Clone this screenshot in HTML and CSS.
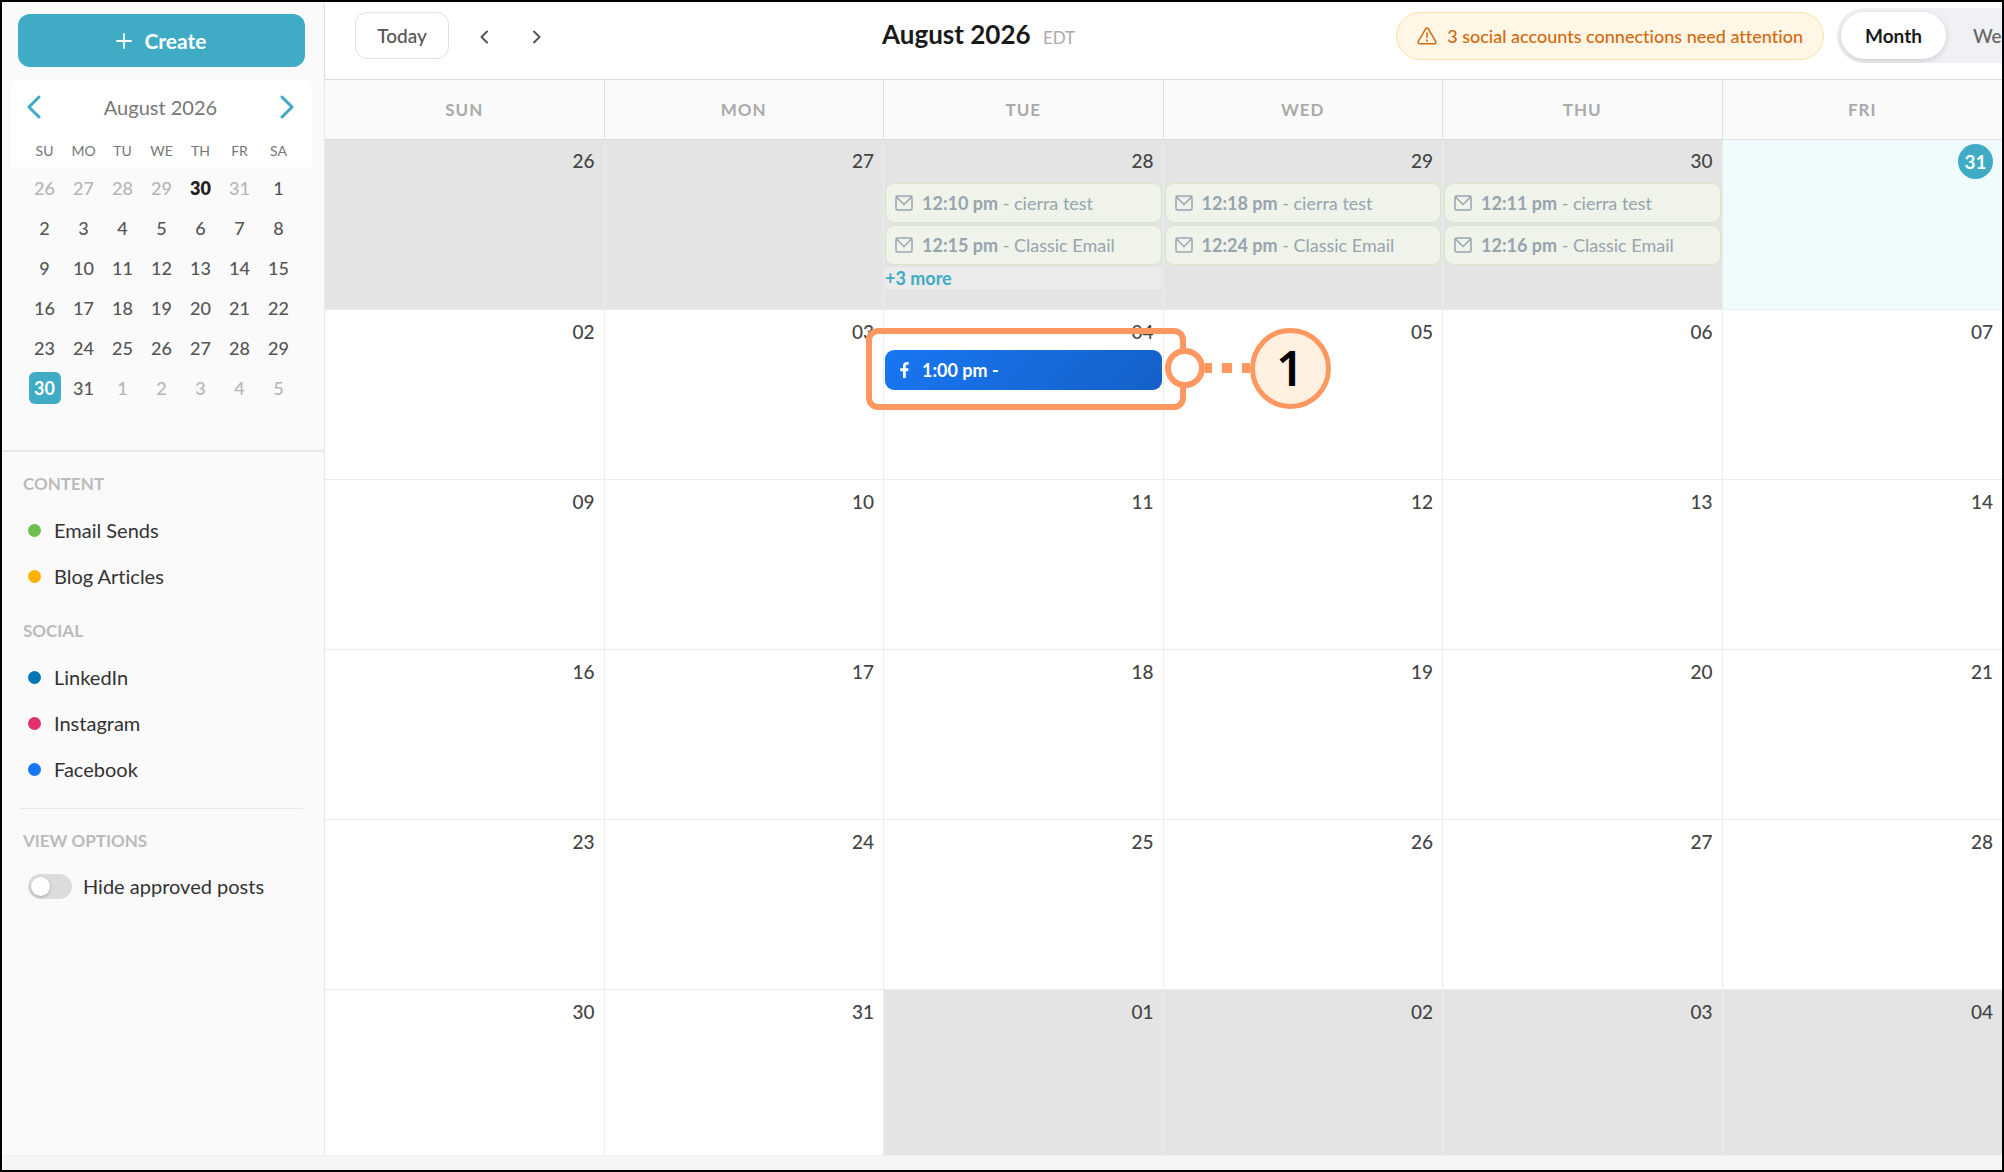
FILE: index.html
```html
<!DOCTYPE html>
<html lang="en">
<head>
  <meta charset="UTF-8" />
  <meta name="viewport" content="width=device-width, initial-scale=1.0"/>
  <title>Marketing Calendar</title>
  <link rel="stylesheet" href="styles.css">
</head>
<body>
  <svg class="sprite" aria-hidden="true">
    <symbol id="mail" viewBox="0 0 18 18">
      <rect x="1" y="2" width="16" height="14" rx="1.5" fill="none" stroke="currentColor" stroke-width="1.5"/>
      <path d="M1.5 3 L9 10.5 L16.5 3" fill="none" stroke="currentColor" stroke-width="1.5"/>
    </symbol>
  </svg>

  <div class="app">
    <div class="workspace">
      <aside class="sidebar">
        <div class="sidebar-top">
          <button class="create-btn" type="button">
            <svg width="16" height="16" viewBox="0 0 16 16" aria-hidden="true"><path d="M8 1v14M1 8h14" stroke="#fff" stroke-width="1.8" stroke-linecap="round"/></svg>
            Create
          </button>

          <div class="mini">
            <div class="mini-head">
              <button class="mini-nav" type="button" aria-label="Previous month">
                <svg width="14" height="24" viewBox="0 0 14 24"><path d="M12 2 L2 12 L12 22"/></svg>
              </button>
              <span>August 2026</span>
              <button class="mini-nav" type="button" aria-label="Next month">
                <svg width="14" height="24" viewBox="0 0 14 24"><path d="M2 2 L12 12 L2 22"/></svg>
              </button>
            </div>
            <table class="mini-table">
              <thead>
                <tr><th>SU</th><th>MO</th><th>TU</th><th>WE</th><th>TH</th><th>FR</th><th>SA</th></tr>
              </thead>
              <tbody>
                <tr><td class="out">26</td><td class="out">27</td><td class="out">28</td><td class="out">29</td><td class="now">30</td><td class="out">31</td><td>1</td></tr>
                <tr><td>2</td><td>3</td><td>4</td><td>5</td><td>6</td><td>7</td><td>8</td></tr>
                <tr><td>9</td><td>10</td><td>11</td><td>12</td><td>13</td><td>14</td><td>15</td></tr>
                <tr><td>16</td><td>17</td><td>18</td><td>19</td><td>20</td><td>21</td><td>22</td></tr>
                <tr><td>23</td><td>24</td><td>25</td><td>26</td><td>27</td><td>28</td><td>29</td></tr>
                <tr><td><span class="picked">30</span></td><td>31</td><td class="out">1</td><td class="out">2</td><td class="out">3</td><td class="out">4</td><td class="out">5</td></tr>
              </tbody>
            </table>
          </div>
        </div>

        <div class="filters">
          <h2>CONTENT</h2>
          <ul>
            <li><span class="dot email"></span>Email Sends</li>
            <li><span class="dot blog"></span>Blog Articles</li>
          </ul>
          <h2>SOCIAL</h2>
          <ul>
            <li><span class="dot linkedin"></span>LinkedIn</li>
            <li><span class="dot instagram"></span>Instagram</li>
            <li><span class="dot facebook"></span>Facebook</li>
          </ul>
          <hr>
          <h2>VIEW OPTIONS</h2>
          <label class="toggle"><input type="checkbox">Hide approved posts</label>
        </div>
      </aside>

      <main class="main">
        <header class="toolbar">
          <div class="nav">
            <button class="today-btn" type="button">Today</button>
            <button class="arrow" type="button" aria-label="Previous">
              <svg width="8" height="14" viewBox="0 0 8 14"><path d="M7 1.5 L1.5 7 L7 12.5"/></svg>
            </button>
            <button class="arrow" type="button" aria-label="Next">
              <svg width="8" height="14" viewBox="0 0 8 14"><path d="M1 1.5 L6.5 7 L1 12.5"/></svg>
            </button>
          </div>
          <h1>August 2026 <small>EDT</small></h1>
          <div class="actions">
            <button class="warning" type="button">
              <svg width="20" height="18" viewBox="0 0 20 18" aria-hidden="true"><path d="M8.7 1.8 L1.3 14.4 Q0.6 16.6 2.6 16.8 H17.4 Q19.4 16.6 18.7 14.4 L11.3 1.8 Q10 0.2 8.7 1.8 Z M10 6v4.6M10 13v1.2" fill="none" stroke="currentColor" stroke-width="1.5" stroke-linecap="round" stroke-linejoin="round"/></svg>
              3 social accounts connections need attention
            </button>
            <div class="views">
              <button class="active" type="button">Month</button>
              <button type="button">Week</button>
            </div>
          </div>
        </header>

        <table class="calendar">
          <thead>
            <tr><th>SUN</th><th>MON</th><th>TUE</th><th>WED</th><th>THU</th><th>FRI</th></tr>
          </thead>
          <tbody>
            <tr class="tall">
              <td class="off"><div class="date">26</div></td>
              <td class="off"><div class="date">27</div></td>
              <td class="off">
                <div class="date">28</div>
                <div class="event"><svg class="icon"><use href="#mail"/></svg><p><b>12:10 pm</b> - cierra test</p></div>
                <div class="event"><svg class="icon"><use href="#mail"/></svg><p><b>12:15 pm</b> - Classic Email</p></div>
                <a class="more" href="#">+3 more</a>
              </td>
              <td class="off">
                <div class="date">29</div>
                <div class="event"><svg class="icon"><use href="#mail"/></svg><p><b>12:18 pm</b> - cierra test</p></div>
                <div class="event"><svg class="icon"><use href="#mail"/></svg><p><b>12:24 pm</b> - Classic Email</p></div>
              </td>
              <td class="off">
                <div class="date">30</div>
                <div class="event"><svg class="icon"><use href="#mail"/></svg><p><b>12:11 pm</b> - cierra test</p></div>
                <div class="event"><svg class="icon"><use href="#mail"/></svg><p><b>12:16 pm</b> - Classic Email</p></div>
              </td>
              <td class="today"><div class="date"><span>31</span></div></td>
            </tr>
            <tr>
              <td><div class="date">02</div></td>
              <td><div class="date">03</div></td>
              <td>
                <div class="date">04</div>
                <div class="event fb">
                  <svg class="icon" viewBox="0 0 18 18" aria-hidden="true"><path d="M8 17 V10.2 H5.2 V7.3 H8 V5.2 C8 2.4 9.5 1 11.8 1 L13.6 1.1 V3.8 H12.2 C11 3.8 10.8 4.5 10.8 5.3 V7.3 H13.6 L13.1 10.2 H10.8 V17 Z" fill="#fff"/></svg>
                  <p><b>1:00 pm -</b></p>
                  <div class="callout">
                    <div class="lead">
                      <span class="knob"></span>
                      <svg class="dashes" width="45" height="10" viewBox="0 0 45 10" aria-hidden="true"><path d="M-3 5H7M17 5H27M37 5H47" stroke="#ff9860" stroke-width="10"/></svg>
                      <span class="step">1</span>
                    </div>
                  </div>
                </div>
              </td>
              <td><div class="date">05</div></td>
              <td><div class="date">06</div></td>
              <td><div class="date">07</div></td>
            </tr>
            <tr>
              <td><div class="date">09</div></td>
              <td><div class="date">10</div></td>
              <td><div class="date">11</div></td>
              <td><div class="date">12</div></td>
              <td><div class="date">13</div></td>
              <td><div class="date">14</div></td>
            </tr>
            <tr>
              <td><div class="date">16</div></td>
              <td><div class="date">17</div></td>
              <td><div class="date">18</div></td>
              <td><div class="date">19</div></td>
              <td><div class="date">20</div></td>
              <td><div class="date">21</div></td>
            </tr>
            <tr>
              <td><div class="date">23</div></td>
              <td><div class="date">24</div></td>
              <td><div class="date">25</div></td>
              <td><div class="date">26</div></td>
              <td><div class="date">27</div></td>
              <td><div class="date">28</div></td>
            </tr>
            <tr class="last">
              <td><div class="date">30</div></td>
              <td><div class="date">31</div></td>
              <td class="off"><div class="date">01</div></td>
              <td class="off"><div class="date">02</div></td>
              <td class="off"><div class="date">03</div></td>
              <td class="off"><div class="date">04</div></td>
            </tr>
          </tbody>
        </table>
      </main>
    </div>
    <footer class="bottom-bar"></footer>
  </div>
</body>
</html>
```
FILE: styles.css
```css
* {
  box-sizing: border-box;
}

body {
  margin: 0;
  font-family: Lato, "Open Sans", sans-serif;
  font-size: 20px;
  font-variant-ligatures: none;
  color: #333;
  background: #fff;
}

button {
  font: inherit;
  font-variant-ligatures: none;
  color: inherit;
  background: none;
  border: none;
  padding: 0;
  cursor: pointer;
}

.sprite {
  display: none;
}

.app {
  display: flex;
  flex-direction: column;
  height: 100vh;
  border: 2px solid #000;
  overflow: hidden;
}

.workspace {
  flex: 1;
  display: flex;
  min-height: 0;
}

.bottom-bar {
  height: 15px;
  background: #f6f6f6;
  border-top: 1px solid #eee;
}

/* sidebar */
.sidebar {
  width: 323px;
  flex-shrink: 0;
  background: #fafafa;
  border-right: 1px solid #e8e8e8;
}

.sidebar-top {
  padding: 12px 9px 42px;
  border-bottom: 2px solid #e8e8e8;
}

.create-btn {
  display: flex;
  align-items: center;
  justify-content: center;
  gap: 12px;
  width: 287px;
  height: 53px;
  margin: 0 7px 12px;
  border-radius: 12px;
  background: #40abc4;
  color: #fff;
  font-size: 21px;
  font-weight: 700;
}

.mini {
  width: 301px;
  border-radius: 8px 8px 0 0;
  background: linear-gradient(#fff 88px, transparent 88px);
}

.mini-head {
  display: flex;
  align-items: center;
  justify-content: space-between;
  height: 56px;
  padding: 0 18px 0 16px;
  color: #777;
}

.mini-nav svg {
  display: block;
  fill: none;
  stroke: #40abc4;
  stroke-width: 3;
  stroke-linecap: round;
  stroke-linejoin: round;
}

.mini-table {
  width: 273px;
  margin: 0 auto;
  table-layout: fixed;
  border-collapse: collapse;
  text-align: center;
}

.mini-table th {
  height: 33px;
  padding: 0 0 2px;
  font-size: 14px;
  font-weight: 400;
  color: #777;
}

.mini-table td {
  height: 40px;
  padding: 0;
  font-size: 18px;
  font-weight: 500;
  color: #555;
}

.mini-table .out {
  color: #b5b5b5;
}

.mini-table .now {
  color: #222;
  font-weight: 800;
}

.picked {
  display: inline-block;
  width: 32px;
  line-height: 32px;
  border-radius: 6px;
  background: #40abc4;
  color: #fff;
  font-weight: 700;
}

.filters {
  padding: 16px 21px;
}

.filters h2 {
  margin: 0;
  font-size: 17px;
  font-weight: 700;
  line-height: 32px;
  color: #bbb;
}

.filters ul {
  list-style: none;
  margin: 0 0 16px;
  padding: 7px 5px 0;
}

.filters li {
  display: flex;
  align-items: center;
  gap: 13px;
  height: 46px;
}

.filters hr {
  height: 1px;
  margin: 0 0 16px -3px;
  border: none;
  background: #e8e8e8;
}

.dot {
  width: 13px;
  height: 13px;
  border-radius: 50%;
}

.dot.email { background: #6fbf50; }
.dot.blog { background: #ffb000; }
.dot.linkedin { background: #0077b5; }
.dot.instagram { background: #e1306c; }
.dot.facebook { background: #1877f2; }

.toggle {
  display: flex;
  align-items: center;
  gap: 11px;
  padding: 6px 5px 0;
  height: 52px;
}

.toggle input {
  appearance: none;
  width: 44px;
  height: 25px;
  margin: 0;
  padding: 3px;
  border-radius: 13px;
  background: #dcdcdc;
}

.toggle input::before {
  content: "";
  display: block;
  width: 19px;
  height: 19px;
  border-radius: 50%;
  background: #fff;
  box-shadow: 0 1px 3px rgba(0, 0, 0, 0.25);
}

.toggle input:checked::before {
  margin-left: auto;
}

/* toolbar */
.main {
  flex: 1;
  display: flex;
  flex-direction: column;
  min-width: 0;
}

.toolbar {
  display: flex;
  align-items: center;
  justify-content: space-between;
  height: 78px;
  padding: 0 0 10px 30px;
  border-bottom: 1px solid #d8d8d8;
  box-shadow: 0 1px 4px rgba(0, 0, 0, 0.08);
}

.nav {
  display: flex;
  align-items: center;
  gap: 5px;
}

.today-btn {
  width: 94px;
  height: 47px;
  margin-right: 6px;
  border: 1px solid #e2e2e2;
  border-radius: 12px;
  font-size: 19px;
  font-weight: 500;
  color: #555;
}

.arrow {
  width: 48px;
  height: 47px;
}

.arrow svg {
  fill: none;
  stroke: #555;
  stroke-width: 2;
  stroke-linecap: round;
  stroke-linejoin: round;
}

.toolbar h1 {
  margin: 0;
  padding-bottom: 4px;
  font-size: 26px;
  font-weight: 700;
  color: #1a1a1a;
}

.toolbar small {
  margin-left: 6px;
  font-size: 17px;
  font-weight: 400;
  color: #aaa;
}

.actions {
  display: flex;
  align-items: center;
  gap: 13px;
}

.warning {
  display: flex;
  align-items: center;
  gap: 10px;
  height: 48px;
  padding: 0 20px;
  border: 1px solid #ffdfa6;
  border-radius: 24px;
  background: #fff6e5;
  color: #d4690c;
  font-size: 18px;
  font-weight: 500;
  white-space: nowrap;
}

/* runs past the right edge of the window */
.views {
  display: flex;
  width: 165px;
  height: 55px;
  padding: 4px;
  padding-right: 0;
  border-radius: 28px 0 0 28px;
  background: #f0f1f5;
  font-size: 19px;
  color: #666;
  overflow: hidden;
}

.views button {
  flex-shrink: 0;
  padding: 0 24px;
  border-radius: 24px;
  font-weight: 500;
}

.views .active {
  margin-right: 3px;
  background: #fff;
  color: #1a1a1a;
  font-weight: 700;
  box-shadow: 0 2px 6px rgba(0, 0, 0, 0.15);
}

/* month grid */
.calendar {
  flex: 1;
  width: 100%;
  table-layout: fixed;
  border-spacing: 0;
  border-collapse: separate;
}

.calendar th,
.calendar td {
  padding: 0;
  border-right: 1px solid #ececec;
}

.calendar th:last-child,
.calendar td:last-child {
  border-right: none;
}

.calendar th {
  height: 60px;
  border-right-color: #e0e0e0;
  border-bottom: 1px solid #dedede;
  background: #fafafa;
  font-size: 17px;
  font-weight: 700;
  letter-spacing: 1px;
  color: #aaa;
}

.calendar td {
  height: 170px;
  border-bottom: 1px solid #ececec;
  vertical-align: top;
}

.calendar .last td {
  height: auto;
  border-bottom: none;
}

.calendar .off {
  background: #e4e4e4;
}

.calendar .today {
  background: #effbfd;
}

.date {
  height: 40px;
  padding: 0 9px;
  font-size: 19px;
  font-weight: 500;
  line-height: 44px;
  text-align: right;
  color: #444;
}

.tall .date {
  height: 43px;
  line-height: 42px;
}

.today .date {
  display: flex;
  align-items: center;
  justify-content: flex-end;
}

.tall .today span {
  width: 35px;
  line-height: 35px;
  border-radius: 50%;
  background: #40abc4;
  color: #fff;
  font-weight: 700;
  text-align: center;
}

.event {
  display: flex;
  align-items: center;
  gap: 9px;
  height: 40px;
  margin: 0 1px 2px;
  padding: 0 9px;
  border: 1px solid #d5e8c4;
  border-radius: 9px;
  background: #eff3ea;
  color: #96a5ae;
  font-size: 18px;
}

.event p {
  margin: 0;
}

.icon {
  width: 18px;
  height: 18px;
}

.event.fb {
  position: relative;
  border-color: transparent;
  background: linear-gradient(135deg, #1877f2, #1560c8) border-box;
  color: #fff;
}

.more {
  display: block;
  margin: 0 1px;
  background: #ebebeb;
  color: #40abc4;
  font-size: 18px;
  font-weight: 700;
  line-height: 22px;
  text-decoration: none;
}

/* numbered marker over the post */
.callout {
  position: absolute;
  top: -23px;
  bottom: -21px;
  left: -20px;
  right: -25px;
  border: 6px solid #ff9860;
  border-radius: 12px;
}

.lead {
  position: absolute;
  top: -7px;
  left: calc(100% - 15px);
  display: flex;
  align-items: center;
  height: 82px;
}

.knob {
  width: 40px;
  height: 40px;
  border: 6px solid #ff9860;
  border-radius: 50%;
  background: #fff;
}

.step {
  width: 81px;
  height: 81px;
  border: 5px solid #ff9860;
  border-radius: 50%;
  background: #fff0df;
  color: #000;
  font-family: "Noto Sans", sans-serif;
  font-size: 48px;
  font-weight: 600;
  line-height: 70px;
  text-align: center;
}
```
